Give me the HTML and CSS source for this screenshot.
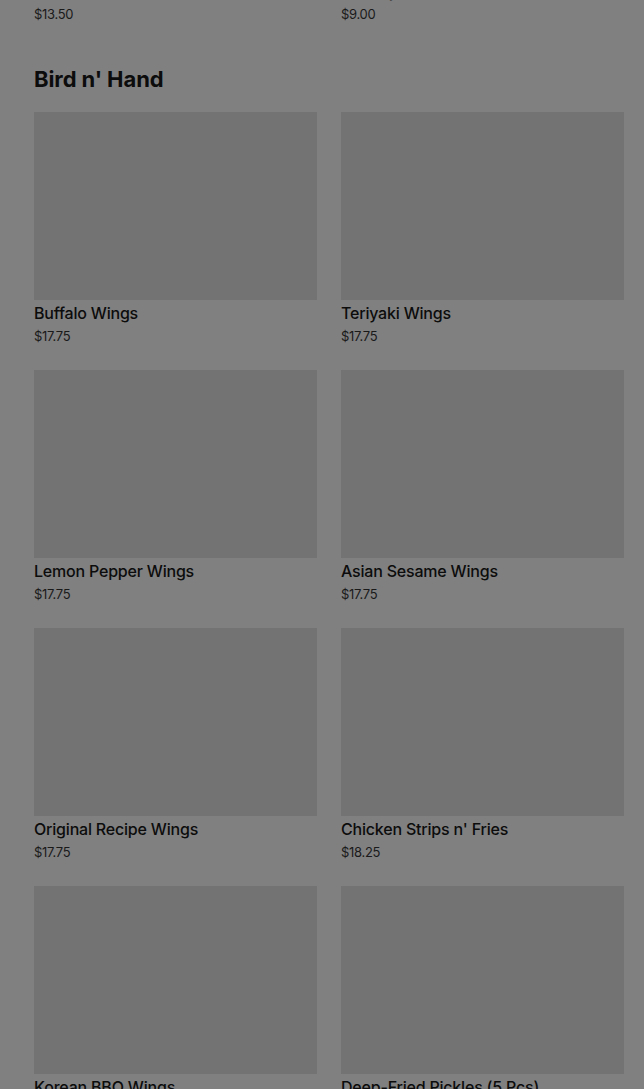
FILE: index.html
```html
<!DOCTYPE html>
<html lang="en">
<head>
    <meta charset="UTF-8">
    <meta name="viewport" content="width=device-width, initial-scale=1.0">
    <title>Menu</title>
    <link rel="stylesheet" href="styles.css">
</head>
<body>
    <div class="menu">
        <div class="item-grid prev-row">
            <div class="item">
                <div class="item-name">Loaded Fries</div>
                <div class="item-price">$13.50</div>
            </div>
            <div class="item">
                <div class="item-name">Cheesy Tots</div>
                <div class="item-price">$9.00</div>
            </div>
        </div>

        <h2 class="section-title">Bird n' Hand</h2>

        <div class="item-grid">
            <div class="item">
                <div class="item-photo"></div>
                <div class="item-name">Buffalo Wings</div>
                <div class="item-price">$17.75</div>
            </div>
            <div class="item">
                <div class="item-photo"></div>
                <div class="item-name">Teriyaki Wings</div>
                <div class="item-price">$17.75</div>
            </div>
            <div class="item">
                <div class="item-photo"></div>
                <div class="item-name">Lemon Pepper Wings</div>
                <div class="item-price">$17.75</div>
            </div>
            <div class="item">
                <div class="item-photo"></div>
                <div class="item-name">Asian Sesame Wings</div>
                <div class="item-price">$17.75</div>
            </div>
            <div class="item">
                <div class="item-photo"></div>
                <div class="item-name">Original Recipe Wings</div>
                <div class="item-price">$17.75</div>
            </div>
            <div class="item">
                <div class="item-photo"></div>
                <div class="item-name">Chicken Strips n' Fries</div>
                <div class="item-price">$18.25</div>
            </div>
            <div class="item">
                <div class="item-photo"></div>
                <div class="item-name">Korean BBQ Wings</div>
                <div class="item-price">$17.75</div>
            </div>
            <div class="item">
                <div class="item-photo"></div>
                <div class="item-name">Deep-Fried Pickles (5 Pcs)</div>
                <div class="item-price">$9.50</div>
            </div>
        </div>
    </div>
</body>
</html>
```

FILE: styles.css
```css
html, body {
    margin: 0;
    padding: 0;
    background-color: #808080;
    overflow: hidden;
}
body {
    font-family: Inter, 'Liberation Sans', sans-serif;
    color: #0c0c0c;
}
.menu {
    padding: 0 20px 0 34px;
}
.item-grid {
    display: grid;
    grid-template-columns: 1fr 1fr;
    column-gap: 24px;
    row-gap: 24px;
}
.prev-row {
    margin-top: -22px;
}
.section-title {
    margin: 41px 0 19px;
    font-size: 22px;
    line-height: 28px;
    font-weight: 700;
    letter-spacing: -0.1px;
}
.item-photo {
    height: 188px;
    background-color: #737373;
}
.item-name {
    font-size: 16px;
    line-height: 26px;
    font-weight: 500;
    letter-spacing: -0.2px;
    white-space: nowrap;
}
.item-price {
    font-size: 13px;
    line-height: 20px;
    color: #1a1a1a;
    letter-spacing: -0.3px;
}
```
